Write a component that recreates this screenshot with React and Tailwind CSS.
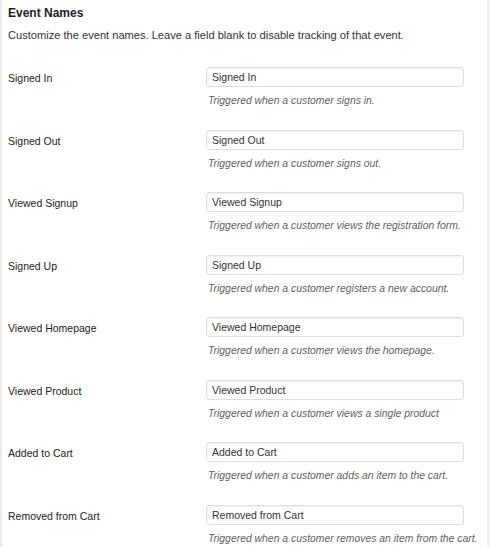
import React from "react";

const rows = [
  ["Signed In", "Triggered when a customer signs in."],
  ["Signed Out", "Triggered when a customer signs out."],
  ["Viewed Signup", "Triggered when a customer views the registration form."],
  ["Signed Up", "Triggered when a customer registers a new account."],
  ["Viewed Homepage", "Triggered when a customer views the homepage."],
  ["Viewed Product", "Triggered when a customer views a single product"],
  ["Added to Cart", "Triggered when a customer adds an item to the cart."],
  ["Removed from Cart", "Triggered when a customer removes an item from the cart."],
];

export default function App() {
  return (
    <div className="flex h-[547px] w-[490px] overflow-hidden bg-[#f1f1f1] font-['Liberation_Sans',Arial,sans-serif] text-[#222]">
      <div className="w-[487px] shrink-0 border-l-2 border-[#ececec] bg-white pl-[6px]">
        <h3 className="mt-[5px] text-[12px] font-bold leading-[16px] text-[#222]">Event Names</h3>
        <p className="mt-[6px] text-[11.1px] leading-[16px] text-[#333]">
          Customize the event names. Leave a field blank to disable tracking of that event.
        </p>
        <div className="mt-[24px] flex flex-col">
          {rows.map(([label, help]) => (
            <div key={label} className="flex h-[62.55px]">
              <div className="w-[198px] shrink-0 pt-[3px] text-[10.5px] leading-[16px] text-[#222]">{label}</div>
              <div className="flex shrink-0 flex-col">
                <input
                  readOnly
                  value={label}
                  className="h-[20px] w-[258px] rounded-[3px] border border-[#dfdfdf] bg-white px-[5px] text-[10.5px] text-[#333] shadow-[inset_0_1px_2px_rgba(0,0,0,0.07)] outline-none"
                />
                <div className="mt-[7px] whitespace-nowrap pl-[2px] text-[10.4px] italic leading-[14px] text-[#5f5f5f]">{help}</div>
              </div>
            </div>
          ))}
        </div>
      </div>
    </div>
  );
}
